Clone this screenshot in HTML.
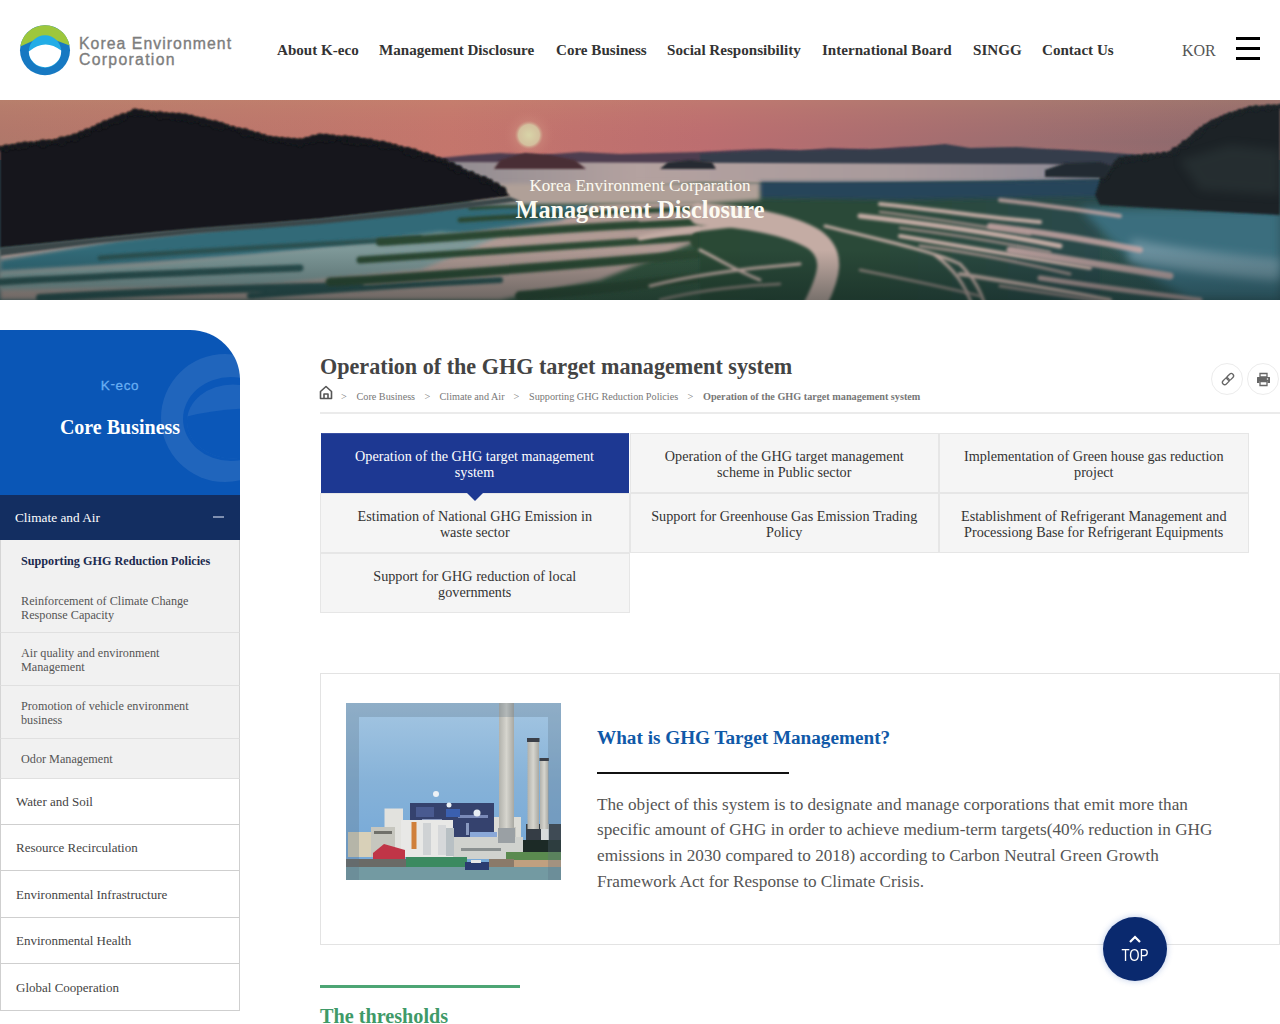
<!DOCTYPE html>
<html><head><meta charset="utf-8">
<style>
*{margin:0;padding:0;box-sizing:border-box}
html,body{width:1280px;height:1024px;overflow:hidden;background:#fff}
body{font-family:"Liberation Serif",serif;color:#333;position:relative}
.abs{position:absolute}
.nw{white-space:nowrap}
/* header */
#hdr{position:absolute;left:0;top:0;width:1280px;height:100px;background:#fff}
.nav{position:absolute;top:42px;font-weight:bold;font-size:15.1px;color:#333;white-space:nowrap;line-height:17px}
.kor{position:absolute;left:1182px;top:41px;font-size:16px;color:#555;line-height:19px}
.hb{position:absolute;left:1236px;width:24px;height:3px;background:#000}
/* hero */
#hero{position:absolute;left:0;top:100px;width:1280px;height:200px;overflow:hidden}
.ht1{position:absolute;left:0;width:1280px;text-align:center;color:#fcfaf2;white-space:nowrap}
/* sidebar */
#card{position:absolute;left:0;top:330px;width:240px;height:165px;background:#0a56b6;border-top-right-radius:50px;overflow:hidden}
#cat{position:absolute;left:0;top:495px;width:240px;height:45px;background:#132e61}
.sub{position:absolute;left:0;width:240px;background:#f1f1f1;border-left:1px solid #d5d5d5;border-right:1px solid #d5d5d5}
.subt{position:absolute;left:21px;font-size:12.2px;line-height:14.2px;color:#555}
.side{position:absolute;left:0;width:240px;background:#fff;border:1px solid #cfcfcf;border-top:none}
.sidet{position:absolute;left:15px;font-size:13px;color:#444;white-space:nowrap}
/* main */
.bc{position:absolute;top:390.5px;font-size:10.2px;line-height:12px;color:#777;white-space:nowrap}
.tab{position:absolute;width:309.5px;height:60px;background:#f5f5f5;border:1px solid #e6e6e6;font-size:14.2px;line-height:15.3px;color:#333;text-align:center;display:flex;align-items:center;justify-content:center;padding:3px 20px 0}
</style></head>
<body>
<div id="hdr">
  <svg class="abs" style="left:0;top:0" width="100" height="100" viewBox="0 0 100 100">
    <circle cx="45" cy="50.2" r="25" fill="#1779c2"/>
    <path d="M20.3 46.5 A25 25 0 0 1 69.6 45.5 L56.4 40.5 L33.6 40.5 Z" fill="#9dc73c"/>
    <circle cx="45" cy="51.5" r="16.2" fill="#22ade6"/>
    <path d="M28.8 51.5 Q45 38 61.2 50.5 A16.2 16.2 0 0 1 28.8 51.5 Z" fill="#fff"/>
  </svg>
  <div class="abs nw" style="left:79px;top:35.5px;font-family:'Liberation Sans',sans-serif;font-size:15.8px;line-height:16px;letter-spacing:1.05px;color:#7d7d7d;-webkit-text-stroke:0.35px #7d7d7d">Korea Environment<br><span style="letter-spacing:1.3px">Corporation</span></div>
  <div class="nav" style="left:277px">About K-eco</div>
  <div class="nav" style="left:379px">Management Disclosure</div>
  <div class="nav" style="left:556px">Core Business</div>
  <div class="nav" style="left:667px">Social Responsibility</div>
  <div class="nav" style="left:822px">International Board</div>
  <div class="nav" style="left:973px">SINGG</div>
  <div class="nav" style="left:1042px">Contact Us</div>
  <div class="kor">KOR</div>
  <div class="hb" style="top:37px"></div>
  <div class="hb" style="top:47px"></div>
  <div class="hb" style="top:57px"></div>
</div>

<div id="hero">
  <svg width="1280" height="200" viewBox="0 0 1280 200">
    <defs>
      <linearGradient id="skyh" x1="0" y1="0" x2="1" y2="0">
        <stop offset="0" stop-color="#b0786a"/>
        <stop offset="0.35" stop-color="#c4766c"/>
        <stop offset="0.55" stop-color="#bc6e70"/>
        <stop offset="0.8" stop-color="#9c6e70"/>
        <stop offset="1" stop-color="#88686c"/>
      </linearGradient>
      <linearGradient id="skyv" x1="0" y1="0" x2="0" y2="1">
        <stop offset="0" stop-color="#c89070" stop-opacity="0.3"/>
        <stop offset="0.6" stop-color="#c87070" stop-opacity="0"/>
        <stop offset="1" stop-color="#d07078" stop-opacity="0.15"/>
      </linearGradient>
      <radialGradient id="sun" cx="0.5" cy="0.5" r="0.5">
        <stop offset="0" stop-color="#d8d4a8"/>
        <stop offset="0.4" stop-color="#d4c4a0" stop-opacity="0.95"/>
        <stop offset="0.55" stop-color="#d09080" stop-opacity="0.35"/>
        <stop offset="1" stop-color="#c87870" stop-opacity="0"/>
      </radialGradient>
      <linearGradient id="silver" x1="0" y1="0" x2="1" y2="0">
        <stop offset="0" stop-color="#8f8a90"/>
        <stop offset="0.3" stop-color="#b4a2a0"/>
        <stop offset="0.7" stop-color="#a89a9c"/>
        <stop offset="1" stop-color="#8a8894"/>
      </linearGradient>
      <linearGradient id="flat" x1="0" y1="0" x2="1" y2="0">
        <stop offset="0" stop-color="#3c6468"/>
        <stop offset="0.45" stop-color="#33553f"/>
        <stop offset="0.75" stop-color="#2b4a3a"/>
        <stop offset="1" stop-color="#2e5560"/>
      </linearGradient>
      <filter id="bl" filterUnits="userSpaceOnUse" x="0" y="0" width="1280" height="200"><feGaussianBlur stdDeviation="0.8"/></filter>
      <linearGradient id="vig" x1="0" y1="0" x2="0" y2="1"><stop offset="0" stop-color="#0a1a1a" stop-opacity="0"/><stop offset="1" stop-color="#0a1a1a" stop-opacity="0.4"/></linearGradient>
      <linearGradient id="flatr" x1="0" y1="0" x2="1" y2="0"><stop offset="0" stop-color="#2a4a36"/><stop offset="0.5" stop-color="#2a4a3a"/><stop offset="1" stop-color="#2a4a4c"/></linearGradient>
      <filter id="bl15" filterUnits="userSpaceOnUse" x="0" y="0" width="1280" height="200"><feGaussianBlur stdDeviation="1.4"/></filter>
      <filter id="bl2" filterUnits="userSpaceOnUse" x="0" y="0" width="1280" height="200"><feGaussianBlur stdDeviation="2"/></filter>
      <filter id="bl4" filterUnits="userSpaceOnUse" x="0" y="0" width="1280" height="200"><feGaussianBlur stdDeviation="5"/></filter>
    </defs>
    <rect width="1280" height="200" fill="url(#skyh)"/>
    <rect width="1280" height="70" fill="url(#skyv)"/>
    <circle cx="529" cy="35" r="26" fill="url(#sun)"/>
    <!-- base flats -->
    <rect y="60" width="1280" height="140" fill="url(#flat)"/>
    <!-- distant mountains -->
    <path d="M440 58 L470 55 L500 53 L540 55 L580 52 L620 54 L660 53 L700 52 L740 50 L770 49 L800 51 L830 48 L870 50 L900 47 L940 46 L970 51 L1000 49 L1030 51 L1060 50 L1090 52 L1130 56 L1130 66 L440 66 Z" fill="#4e3e50" filter="url(#bl)"/>
    <path d="M700 54 L760 51 L830 50 L900 49 L945 44 L970 48 L1017 47 L1060 50 L1100 52 L1140 55 L1140 65 L700 65 Z" fill="#363e4c" filter="url(#bl)"/>
    <!-- silver water -->
    <path d="M440 62 L1045 64 L1100 66 L1100 80 L960 82 L820 84 L700 82 L600 88 L520 96 L460 100 Z" fill="url(#silver)" filter="url(#bl)"/>
    <!-- small islands -->
    <path d="M494 69 L500 60 L525 53 L550 55 L575 60 L586 69 Z" fill="#4a2e36" filter="url(#bl)"/>
    <path d="M660 69 L668 62 L690 60 L712 62 L716 69 Z" fill="#262a30" filter="url(#bl)"/>
    <!-- dark blue band -->
    <path d="M720 84 L900 83 L1100 80 L1100 96 L1000 94 L820 92 L720 90 Z" fill="#2c4656" filter="url(#bl)"/>
    <!-- teal water left -->
    <path d="M0 150 L120 136 L260 122 L420 108 L520 98 L640 96 L720 100 L700 140 L600 180 L500 200 L0 200 Z" fill="#b09a94" filter="url(#bl2)"/>
    <path d="M0 160 L120 140 L260 124 L420 110 L520 100 L600 100 L560 120 L420 140 L250 156 L100 166 L0 172 Z" fill="#336a78" filter="url(#bl2)"/>
    <path d="M0 172 L150 164 L300 150 L440 132 L500 136 L420 170 L250 186 L0 190 Z" fill="#7e9898" filter="url(#bl2)"/>
    <!-- dark streaks left -->
    <g fill="none" stroke="#2b5050" stroke-linecap="round" filter="url(#bl15)">
      <path d="M0 182 C100 176 200 172 300 168" stroke-width="7"/>
      <path d="M40 198 C140 192 240 188 360 186" stroke-width="8"/>
      <path d="M100 158 C200 150 300 146 420 138" stroke-width="5"/>
      <path d="M250 196 C330 190 420 184 500 180" stroke-width="6"/>
    </g>
    <!-- dark green bands in flats -->
    <g fill="none" stroke="#2a4632" stroke-linecap="round" filter="url(#bl15)">
      <path d="M470 108 C550 104 640 100 720 100" stroke-width="4"/>
      <path d="M460 120 C560 114 650 110 730 108" stroke-width="5"/>
      <path d="M380 142 C480 136 580 126 700 122" stroke-width="8"/>
      <path d="M360 160 C460 154 560 146 690 138" stroke-width="7"/>
      <path d="M330 182 C440 176 560 166 720 152" stroke-width="9"/>
      <path d="M520 196 C600 190 680 180 760 170" stroke-width="10"/>
      <path d="M700 140 C740 150 770 175 765 205" stroke-width="20"/>
    </g>
    <path d="M700 100 L1100 96 L1100 200 L700 200 Z" fill="url(#flatr)" filter="url(#bl)"/>
    <!-- right teal water -->
    <path d="M1080 108 L1280 110 L1280 200 L1190 200 L1150 175 L1110 140 Z" fill="#3b6e7e" filter="url(#bl4)"/>
    <path d="M1130 150 C1180 160 1230 166 1280 170" fill="none" stroke="#6a909e" stroke-width="22" filter="url(#bl4)"/>
    
    <path d="M760 82 L1000 82 L1100 80 L1100 96 L900 100 L760 98 Z" fill="#26445a" filter="url(#bl2)"/>
    <path d="M480 84 L760 82 L760 100 L700 104 L560 104 L470 104 Z" fill="#b0a098" filter="url(#bl2)"/>
    <g fill="none" stroke="#c4aca4" stroke-linecap="round" filter="url(#bl15)">
      <path d="M700 114 C740 116 790 124 815 140 C835 155 830 175 815 205" stroke-width="22"/>
      <path d="M640 138 C680 130 720 126 760 122" stroke-width="5"/>
      <path d="M650 186 C690 176 730 170 800 164" stroke-width="3"/>
      <path d="M825 126 C880 140 930 150 960 164 C975 180 980 190 985 205" stroke-width="3"/>
      <path d="M935 155 C955 170 965 185 972 205" stroke-width="3"/>
      <path d="M880 104 C940 110 990 118 1040 122" stroke-width="4"/>
      <path d="M860 116 C930 124 1000 134 1060 146" stroke-width="5"/>
      <path d="M900 136 C960 146 1020 156 1090 168" stroke-width="4"/>
      <path d="M960 174 C1010 182 1060 190 1110 200" stroke-width="4"/>
      <path d="M700 150 C720 160 735 170 760 180" stroke-width="3"/>
    </g>
    <g fill="none" stroke="#b89c98" stroke-linecap="round" filter="url(#bl15)" opacity="0.8">
      <path d="M880 112 C930 118 980 126 1030 134" stroke-width="2.5"/>
      <path d="M900 128 C950 134 1000 142 1050 152" stroke-width="2.5"/>
      <path d="M920 146 C970 152 1020 162 1070 174" stroke-width="3"/>
      <path d="M860 170 C900 178 940 186 980 196" stroke-width="2.5"/>
      <path d="M1000 186 C1040 192 1080 198 1120 204" stroke-width="3"/>
      <path d="M660 200 C700 190 740 186 780 184" stroke-width="2.5"/>
      <path d="M640 120 C680 118 700 116 720 114" stroke-width="3"/>
    </g>
    <g fill="none" stroke="#c8a6a4" stroke-linecap="round" filter="url(#bl15)" opacity="0.85">
      <path d="M1000 100 C1040 104 1080 110 1120 116" stroke-width="4"/>
      <path d="M990 126 C1040 132 1090 140 1140 150" stroke-width="6"/>
      <path d="M1010 150 C1060 158 1110 166 1170 176" stroke-width="7"/>
      <path d="M1040 178 C1090 186 1140 192 1200 200" stroke-width="5"/>
    </g>
    <rect x="0" y="150" width="1280" height="50" fill="url(#vig)"/>
    <!-- left island -->
    <path d="M0 47 L25 43 L55 40 L75 35 L105 22 L135 10 L160 13 L185 15 L215 22 L245 30 L270 37 L300 40 L320 35 L345 37 L370 40 L395 45 L420 52 L445 60 L465 70 L490 80 L502 88 L510 96 L450 104 L400 110 L320 119 L250 125 L160 132 L100 138 L40 144 L0 148 Z" fill="#12181a" filter="url(#bl)"/>
    <path d="M0 148 L100 138 L200 128 L320 119 L400 110 L510 97 L520 101 L420 114 L320 124 L200 133 L100 143 L0 156 Z" fill="#3a4648" filter="url(#bl)"/>
    <g fill="#12181a" filter="url(#bl)"><circle cx="0.0" cy="48.6" r="2.6"/><circle cx="6.2" cy="48.0" r="3.4"/><circle cx="12.5" cy="46.8" r="2.9"/><circle cx="18.8" cy="46.1" r="3.5"/><circle cx="25.0" cy="45.1" r="3.6"/><circle cx="31.0" cy="43.7" r="2.2"/><circle cx="37.0" cy="43.0" r="2.0"/><circle cx="43.0" cy="43.7" r="4.1"/><circle cx="49.0" cy="42.2" r="2.6"/><circle cx="55.0" cy="41.6" r="2.6"/><circle cx="61.7" cy="41.0" r="4.5"/><circle cx="68.3" cy="38.6" r="3.2"/><circle cx="75.0" cy="37.5" r="4.1"/><circle cx="81.0" cy="34.3" r="3.2"/><circle cx="87.0" cy="32.0" r="3.6"/><circle cx="93.0" cy="28.6" r="2.4"/><circle cx="99.0" cy="26.8" r="3.6"/><circle cx="105.0" cy="24.5" r="4.2"/><circle cx="111.0" cy="21.6" r="3.3"/><circle cx="117.0" cy="19.5" r="3.9"/><circle cx="123.0" cy="17.0" r="3.7"/><circle cx="129.0" cy="13.7" r="2.2"/><circle cx="135.0" cy="12.3" r="3.9"/><circle cx="141.2" cy="12.8" r="3.5"/><circle cx="147.5" cy="13.2" r="2.8"/><circle cx="153.8" cy="13.5" r="2.1"/><circle cx="160.0" cy="15.5" r="4.2"/><circle cx="166.2" cy="15.4" r="3.2"/><circle cx="172.5" cy="16.3" r="3.8"/><circle cx="178.8" cy="17.0" r="4.2"/><circle cx="185.0" cy="17.3" r="3.8"/><circle cx="191.0" cy="19.0" r="4.3"/><circle cx="197.0" cy="19.6" r="3.0"/><circle cx="203.0" cy="21.6" r="4.0"/><circle cx="209.0" cy="22.5" r="3.1"/><circle cx="215.0" cy="24.6" r="4.3"/><circle cx="221.0" cy="26.1" r="4.2"/><circle cx="227.0" cy="26.5" r="2.2"/><circle cx="233.0" cy="28.2" r="2.3"/><circle cx="239.0" cy="29.9" r="2.5"/><circle cx="245.0" cy="32.6" r="4.4"/><circle cx="251.2" cy="33.6" r="3.1"/><circle cx="257.5" cy="35.6" r="3.6"/><circle cx="263.8" cy="36.9" r="2.8"/><circle cx="270.0" cy="39.0" r="3.3"/><circle cx="276.0" cy="39.4" r="3.0"/><circle cx="282.0" cy="39.9" r="2.9"/><circle cx="288.0" cy="40.9" r="3.5"/><circle cx="294.0" cy="41.5" r="3.5"/><circle cx="300.0" cy="42.6" r="4.3"/><circle cx="306.7" cy="40.6" r="3.7"/><circle cx="313.3" cy="39.3" r="4.3"/><circle cx="320.0" cy="37.5" r="4.1"/><circle cx="326.2" cy="38.2" r="4.5"/><circle cx="332.5" cy="38.2" r="3.7"/><circle cx="338.8" cy="37.9" r="2.4"/><circle cx="345.0" cy="39.5" r="4.2"/><circle cx="351.2" cy="40.4" r="4.4"/><circle cx="357.5" cy="41.1" r="4.3"/><circle cx="363.8" cy="41.3" r="3.4"/><circle cx="370.0" cy="42.3" r="3.8"/><circle cx="376.2" cy="42.8" r="2.5"/><circle cx="382.5" cy="44.9" r="4.1"/><circle cx="388.8" cy="45.8" r="3.4"/><circle cx="395.0" cy="46.6" r="2.7"/><circle cx="401.2" cy="48.0" r="2.2"/><circle cx="407.5" cy="51.0" r="4.1"/><circle cx="413.8" cy="52.9" r="4.5"/><circle cx="420.0" cy="53.3" r="2.2"/><circle cx="426.2" cy="56.4" r="4.0"/><circle cx="432.5" cy="57.8" r="3.0"/><circle cx="438.8" cy="59.4" r="2.4"/><circle cx="445.0" cy="61.6" r="2.7"/><circle cx="451.7" cy="65.7" r="3.9"/><circle cx="458.3" cy="69.2" r="4.2"/><circle cx="465.0" cy="71.3" r="2.1"/><circle cx="471.2" cy="74.6" r="3.5"/><circle cx="477.5" cy="76.3" r="2.1"/><circle cx="483.8" cy="79.8" r="3.8"/><circle cx="490.0" cy="81.7" r="2.8"/><circle cx="496.0" cy="86.5" r="4.2"/><circle cx="502.0" cy="90.7" r="4.5"/></g>
    <!-- right island -->
    <path d="M1280 5 L1250 7 L1225 15 L1205 25 L1190 38 L1180 45 L1170 52 L1145 55 L1120 58 L1100 80 L1095 95 L1100 105 L1150 108 L1280 115 Z" fill="#1b2426" filter="url(#bl)"/>
    <g fill="#1b2426" filter="url(#bl)"><circle cx="1280.0" cy="6.6" r="2.6"/><circle cx="1274.0" cy="6.8" r="2.3"/><circle cx="1268.0" cy="7.8" r="3.3"/><circle cx="1262.0" cy="7.5" r="2.1"/><circle cx="1256.0" cy="8.4" r="3.1"/><circle cx="1250.0" cy="8.6" r="2.7"/><circle cx="1245.0" cy="9.9" r="2.1"/><circle cx="1240.0" cy="12.0" r="3.0"/><circle cx="1235.0" cy="13.0" r="2.1"/><circle cx="1230.0" cy="15.1" r="2.9"/><circle cx="1225.0" cy="16.3" r="2.1"/><circle cx="1221.0" cy="18.3" r="2.2"/><circle cx="1217.0" cy="20.7" r="2.8"/><circle cx="1213.0" cy="23.2" r="3.7"/><circle cx="1209.0" cy="24.3" r="2.2"/><circle cx="1205.0" cy="26.5" r="2.4"/><circle cx="1201.2" cy="30.2" r="3.3"/><circle cx="1197.5" cy="33.8" r="3.9"/><circle cx="1193.8" cy="36.6" r="3.2"/><circle cx="1190.0" cy="39.7" r="2.8"/><circle cx="1185.0" cy="43.9" r="4.0"/><circle cx="1180.0" cy="46.3" r="2.1"/><circle cx="1175.0" cy="50.7" r="3.7"/><circle cx="1170.0" cy="53.5" r="2.6"/><circle cx="1163.8" cy="54.1" r="2.3"/><circle cx="1157.5" cy="54.8" r="2.2"/><circle cx="1151.2" cy="55.8" r="2.6"/><circle cx="1145.0" cy="57.2" r="3.6"/><circle cx="1138.8" cy="57.2" r="2.4"/><circle cx="1132.5" cy="58.4" r="3.2"/><circle cx="1126.2" cy="59.2" r="3.3"/><circle cx="1120.0" cy="59.6" r="2.7"/><circle cx="1117.1" cy="63.0" r="3.1"/><circle cx="1114.3" cy="65.6" r="2.1"/><circle cx="1111.4" cy="68.7" r="2.1"/><circle cx="1108.6" cy="72.0" r="2.4"/><circle cx="1105.7" cy="75.7" r="3.4"/><circle cx="1102.9" cy="78.6" r="2.9"/></g>
    <path d="M1180 60 L1230 45 L1280 50 L1280 95 L1200 90 Z" fill="#3a4a48" opacity="0.3" filter="url(#bl4)"/>
    <path d="M1045 70 L1065 63 L1100 62 L1112 66 L1105 78 L1045 77 Z" fill="#222c30" filter="url(#bl)"/>
  </svg>
  <div class="ht1" style="top:76px;font-size:17.1px;line-height:20px">Korea Environment Corparation</div>
  <div class="ht1" style="top:96px;font-size:24.2px;line-height:28px;font-weight:bold">Management Disclosure</div>
</div>

<!-- sidebar -->
<div id="card">
  <svg class="abs" style="left:0;top:0" width="240" height="165" viewBox="0 330 240 165">
    <defs><clipPath id="hole"><ellipse cx="233" cy="421.5" rx="46" ry="37"/></clipPath></defs>
    <circle cx="225" cy="418" r="64" fill="#ffffff" fill-opacity="0.09"/>
    <ellipse cx="231" cy="419" rx="48" ry="42" fill="#0b57b8"/>
    <ellipse cx="233" cy="421.5" rx="46" ry="37" fill="#ffffff" fill-opacity="0.08"/>
    <path d="M175 420 Q225 404 290 410 L290 480 L175 480 Z" fill="#0b57b8" clip-path="url(#hole)"/>
  </svg>
  <div class="abs" style="left:0;top:48px;width:240px;text-align:center;font-family:'Liberation Sans',sans-serif;font-size:13.5px;letter-spacing:0.6px;color:#69aef2;-webkit-text-stroke:0.3px #69aef2">K<span style="position:relative;top:-2px">-</span>eco</div>
  <div class="abs nw" style="left:0;top:86px;width:240px;text-align:center;font-size:20px;font-weight:bold;color:#fff">Core Business</div>
</div>
<div id="cat">
  <div class="abs nw" style="left:15px;top:15px;font-size:13.3px;color:#fff">Climate and Air</div>
  <div class="abs" style="left:213px;top:21px;width:11px;height:2px;background:#7f8fb0"></div>
</div>


<!-- submenu -->
<div class="sub" style="top:540px;height:93px;border-bottom:1px solid #e0e0e0"></div>
<div class="subt nw" style="top:554px;font-weight:bold;color:#1b2a4e">Supporting GHG Reduction Policies</div>
<div class="subt" style="top:593.5px">Reinforcement of Climate Change<br>Response Capacity</div>
<div class="sub" style="top:633px;height:53px;border-bottom:1px solid #e0e0e0"></div>
<div class="subt" style="top:646px">Air quality and environment<br>Management</div>
<div class="sub" style="top:686px;height:53px;border-bottom:1px solid #e0e0e0"></div>
<div class="subt" style="top:699px">Promotion of vehicle environment<br>business</div>
<div class="sub" style="top:739px;height:40px;border-bottom:1px solid #e0e0e0"></div>
<div class="subt nw" style="top:752px">Odor Management</div>
<div class="side" style="top:779px;height:46px"><div class="sidet" style="top:15px">Water and Soil</div></div>
<div class="side" style="top:825px;height:46px"><div class="sidet" style="top:15px">Resource Recirculation</div></div>
<div class="side" style="top:871px;height:47px"><div class="sidet" style="top:16px">Environmental Infrastructure</div></div>
<div class="side" style="top:918px;height:46px"><div class="sidet" style="top:15px">Environmental Health</div></div>
<div class="side" style="top:964px;height:47px"><div class="sidet" style="top:16px">Global Cooperation</div></div>

<!-- main -->
<div class="abs nw" style="left:320px;top:354px;font-size:22.15px;line-height:25px;font-weight:bold;color:#444">Operation of the GHG target management system</div>
<svg class="abs" style="left:319px;top:385px" width="14" height="15" viewBox="0 0 14 15"><path d="M1.5 6.5 L7 1.5 L12.5 6.5 V13.5 H1.5 Z M5 13.5 V9 H9 V13.5" fill="none" stroke="#555" stroke-width="1.6" stroke-linejoin="round"/></svg>
<div class="bc" style="left:341px">&gt;</div><div class="bc" style="left:356.5px">Core Business</div><div class="bc" style="left:424.5px">&gt;</div><div class="bc" style="left:439.5px">Climate and Air</div><div class="bc" style="left:513.5px">&gt;</div><div class="bc" style="left:529px">Supporting GHG Reduction Policies</div><div class="bc" style="left:687.5px">&gt;</div><div class="bc" style="left:703px;font-weight:bold">Operation of the GHG target management system</div>
<div class="abs" style="left:320px;top:412px;width:960px;height:2px;background:#ebebeb"></div>
<div class="abs" style="left:1211px;top:363px;width:32px;height:32px;border-radius:50%;border:1.5px solid #ececec;background:#fff"></div>
<svg class="abs" style="left:1219.5px;top:371px" width="16" height="16" viewBox="0 0 16 16"><g fill="none" stroke="#666" stroke-width="1.3"><rect x="3.5" y="6.5" width="4.6" height="7.6" rx="2.3" transform="rotate(45 5.8 10.3)"/><rect x="7.9" y="2.1" width="4.6" height="7.6" rx="2.3" transform="rotate(45 10.2 5.9)"/></g></svg>
<div class="abs" style="left:1247px;top:363px;width:32px;height:32px;border-radius:50%;border:1.5px solid #ececec;background:#fff"></div>
<svg class="abs" style="left:1256px;top:372px" width="15" height="15" viewBox="0 0 15 15"><path d="M4 1.5 H11 V5 H4 Z" fill="none" stroke="#666" stroke-width="1.3"/><path d="M1.5 5 H13.5 Q14 5 14 5.5 V11 H11.5 V9 H3.5 V11 H1 V5.5 Q1 5 1.5 5 Z" fill="#666"/><path d="M4 9.5 H11 V13.5 H4 Z" fill="none" stroke="#666" stroke-width="1.3"/><circle cx="11.5" cy="7" r="0.8" fill="#fff"/></svg>

<div class="tab" style="left:320.5px;top:433px;width:308px;background:#1d3892;border-color:#1d3892;border-top-color:#3a50a2;color:#fff">Operation of the GHG target management system</div>
<div class="abs" style="left:466px;top:492px;width:0;height:0;border-left:9px solid transparent;border-right:9px solid transparent;border-top:9px solid #1d3892;z-index:5"></div>
<div class="tab" style="left:629.5px;top:433px">Operation of the GHG target management scheme in Public sector</div>
<div class="tab" style="left:939px;top:433px">Implementation of Green house gas reduction project</div>
<div class="tab" style="left:320px;top:493px">Estimation of National GHG Emission in waste sector</div>
<div class="tab" style="left:629.5px;top:493px">Support for Greenhouse Gas Emission Trading Policy</div>
<div class="tab" style="left:939px;top:493px">Establishment of Refrigerant Management and Processiong Base for Refrigerant Equipments</div>
<div class="tab" style="left:320px;top:553px">Support for GHG reduction of local governments</div>

<div class="abs" style="left:320px;top:673px;width:960px;height:272px;border:1px solid #e3e3e3;background:#fff"></div>
<svg class="abs" style="left:346px;top:703px" width="215" height="177" viewBox="0 0 215 177">
  <defs>
    <linearGradient id="psky" x1="0" y1="0" x2="0" y2="1">
      <stop offset="0" stop-color="#a4c6e2"/>
      <stop offset="0.45" stop-color="#86b2d8"/>
      <stop offset="0.8" stop-color="#78aad8"/>
    </linearGradient>
    <linearGradient id="chim" x1="0" y1="0" x2="1" y2="0">
      <stop offset="0" stop-color="#b2b2ac"/>
      <stop offset="0.5" stop-color="#d6d5ce"/>
      <stop offset="1" stop-color="#a8a8a2"/>
    </linearGradient>
    <filter id="pb" x="-2%" y="-2%" width="104%" height="104%"><feGaussianBlur stdDeviation="0.7"/></filter>
  </defs>
  <rect width="215" height="177" fill="url(#psky)"/>
    <g filter="url(#pb)">
  <!-- structures -->
  <rect x="134" y="114" width="41" height="20" fill="#dcdcd6"/>
  <rect x="153" y="124" width="17" height="12" fill="#c8c8c2"/>
  <rect x="180" y="121" width="35" height="28" fill="#343c44"/>
  <rect x="195" y="121" width="8" height="20" fill="#d8dcdc"/>
  <rect x="176" y="137" width="39" height="12" fill="#1e2a28"/>
  <rect x="64" y="100" width="84" height="34" fill="#34426e"/>
  <rect x="76" y="116" width="20" height="4" fill="#8a9ac0"/>
  <rect x="112" y="112" width="30" height="3" fill="#7a8ab8"/>
  <rect x="120" y="120" width="3" height="12" fill="#8a9ac0"/>
  <rect x="70" y="104" width="18" height="10" fill="#4a5a90"/>
  <rect x="100" y="106" width="14" height="8" fill="#3a60b0"/>
  <rect x="124" y="129" width="27" height="12" fill="#8aa8d8"/>
  <rect x="107" y="134" width="70" height="22" fill="#d0d2ce"/>
  <rect x="115" y="145" width="40" height="3" fill="#8a9090"/>
  <rect x="38.5" y="105.5" width="18.5" height="41" fill="#e2e2de"/>
  <rect x="25" y="124" width="24" height="30" fill="#c6c6be"/>
  <rect x="28" y="128" width="18" height="3" fill="#70706a"/>
  <rect x="2" y="129" width="23" height="25" fill="#d8d0b8"/>
  <rect x="55" y="117" width="52" height="37" fill="#e8e8e6"/>
  <rect x="65.5" y="119" width="5" height="27" fill="#d0803a"/>
  <rect x="77" y="120" width="8" height="32" fill="#cfd2d4"/>
  <rect x="92" y="122" width="8" height="30" fill="#d6d8da"/>
  <rect x="100" y="125" width="8" height="28" fill="#b8c0c4"/>
  <path d="M27 150 L38 141 L59 147 L59 156 L27 156 Z" fill="#c03446"/>
  <rect x="160" y="149" width="55" height="8" fill="#5a8a50"/>
  <circle cx="90" cy="91" r="3" fill="#eef2f6"/>
  <circle cx="103" cy="102" r="2.5" fill="#eef2f6"/>
  <circle cx="131" cy="110" r="3.5" fill="#e8eef4"/>
  <!-- chimneys -->
  <rect x="153" y="0" width="15" height="130" fill="url(#chim)"/>
  <rect x="152" y="125" width="17" height="15" fill="#9aa0a4"/>
  <rect x="181.5" y="36" width="11.5" height="90" fill="url(#chim)"/>
  <rect x="181" y="35" width="12.5" height="4" fill="#3a4048"/>
  <rect x="194" y="56" width="8.5" height="70" fill="url(#chim)" />
  <rect x="193.5" y="55" width="9.5" height="3" fill="#3a4048"/>
  <!-- pier -->
  <rect x="0" y="156" width="60" height="8" fill="#6a6a66"/>
  <rect x="60" y="154" width="61" height="10" fill="#3a8a60"/>
  <rect x="143" y="156" width="25" height="8" fill="#8a7a6a"/>
  <rect x="168" y="157" width="47" height="7" fill="#c0a080"/>
  <rect x="0" y="164" width="215" height="13" fill="#739aa2"/>
  <rect x="119" y="159" width="24" height="8" fill="#2a3a70"/>
  <rect x="125" y="157" width="10" height="3" fill="#e8e8e8"/>
  </g>
  <!-- frame overlay -->
  <path d="M0 0 H215 V177 H0 Z M13 14 V177 H202 V14 Z" fill="#5a6e80" fill-opacity="0.28" fill-rule="evenodd"/>
</svg>
<div class="abs nw" style="left:597px;top:727.3px;font-size:19.2px;line-height:22px;font-weight:bold;color:#1059a8">What is GHG Target Management?</div>
<div class="abs" style="left:597px;top:772px;width:192px;height:2px;background:#111"></div>
<div class="abs" style="left:597px;top:791.5px;width:630px;font-size:17.2px;line-height:25.8px;color:#555">The object of this system is to designate and manage corporations that emit more than specific amount of GHG in order to achieve medium-term targets(40% reduction in GHG emissions in 2030 compared to 2018) according to Carbon Neutral Green Growth Framework Act for Response to Climate Crisis.</div>

<div class="abs" style="left:1103px;top:917px;width:64px;height:64px;border-radius:50%;background:#0a296e;box-shadow:0 0 6px rgba(30,80,180,.3)"></div>
<svg class="abs" style="left:1128px;top:934px" width="14" height="10" viewBox="0 0 14 10"><path d="M2 8 L7 3 L12 8" fill="none" stroke="#fff" stroke-width="2.2"/></svg>
<div class="abs" style="left:1103px;top:946px;width:64px;text-align:center;font-family:'Liberation Sans',sans-serif;font-size:16.5px;color:#fff;line-height:18px;transform:scaleX(0.8)">TOP</div>

<div class="abs" style="left:320px;top:985px;width:200px;height:3px;background:#4da574"></div>
<div class="abs nw" style="left:320px;top:1005px;font-size:20.2px;line-height:22px;font-weight:bold;color:#3f9a68">The thresholds</div>

</body></html>
